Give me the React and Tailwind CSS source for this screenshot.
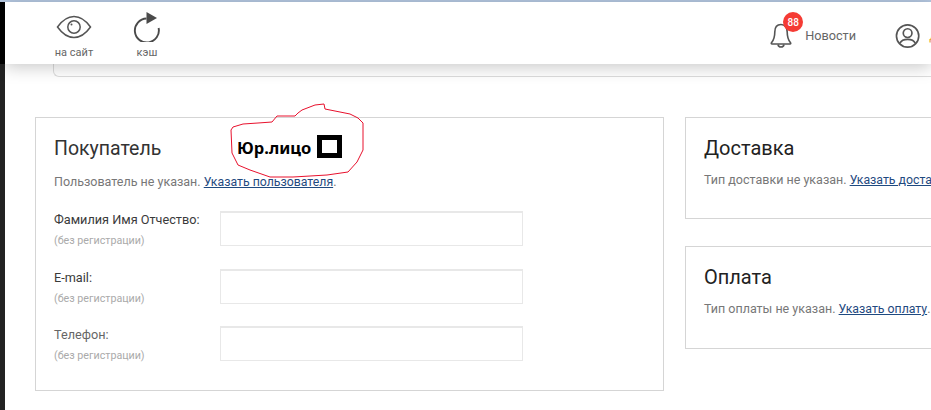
const font = { fontFamily: 'Roboto, sans-serif' };

const EyeIcon = () => (
  <svg width="36" height="24" viewBox="0 0 36 24" fill="none" stroke="#555" strokeWidth="1.5">
    <path d="M1.5 12C6.5 5 11.5 1.5 18 1.5S29.500 5 34.500 12C29.500 19 24.500 22.500 18 22.500S6.500 19 1.500 12Z" />
    <circle cx="18" cy="12" r="6.200" />
    <circle cx="15.500" cy="9.500" r="1" fill="#555" stroke="none" />
  </svg>
);

const RefreshIcon = () => (
  <svg width="28" height="31" viewBox="0 0 28 31" fill="none">
    <path d="M13.500 7.500A12 12 0 1 0 25.600 17" stroke="#4a4a4a" strokeWidth="1.900" />
    <path d="M13.500 1L24 7L13.500 13Z" fill="#4a4a4a" />
  </svg>
);

const BellIcon = () => (
  <svg width="22" height="25" viewBox="0 0 22 25" fill="none" stroke="#555" strokeWidth="1.600" strokeLinejoin="round">
    <path d="M11 1.500C6.500 1.500 4.800 5 4.800 9C4.800 14 3.800 17 1.500 19.800C1 20.500 1.300 21 2 21H20C20.700 21 21 20.500 20.500 19.800C18.200 17 17.200 14 17.200 9C17.200 5 15.500 1.500 11 1.500Z" />
    <path d="M8 21.500C8.300 23.200 9.500 24 11 24S13.700 23.200 14 21.500" />
  </svg>
);

const UserIcon = () => (
  <svg width="26" height="26" viewBox="0 0 26 26" fill="none" stroke="#555" strokeWidth="1.700">
    <circle cx="13" cy="13" r="11.500" />
    <circle cx="13" cy="10" r="4.500" />
    <path d="M5 20.500C6.500 17.500 9.500 16.500 13 16.500S19.500 17.500 21 20.500" />
  </svg>
);

const Scribble = () => (
  <svg className="absolute left-0 top-0 pointer-events-none" width="931" height="410" fill="none" stroke="#e8112d" strokeWidth="1">
    <path d="M231 130L233 127L243 124L258 123L272 122L277 116L295 116L298 113L302 110L315 105L324 104L325 109L350 114L358 118L363 123L363 150L357 162L348 172L327 175L293 177L270 177L250 170L238 165L232 153L231 130Z" />
  </svg>
);

const Field = ({ label, dark, mb }) => (
  <div className={`flex h-[35px] ${mb}`}>
    <div className="w-[166px] shrink-0">
      <div className={`text-[12.700px] leading-[18px] ${dark ? 'text-[#3a3a3a]' : 'text-[#666]'}`}>{label}</div>
      <div className="text-[10.700px] leading-[14px] mt-[5px] text-[#aaa]">(без регистрации)</div>
    </div>
    <div className="w-[303px] h-[35px] border border-[#e8e8e8] border-t-2 bg-white"></div>
  </div>
);

const SideCard = ({ title, text, link, tail, height }) => (
  <div className={`w-[300px] border border-r-0 border-[#d5d5d5] pl-[18px] pt-[17px] whitespace-nowrap ${height}`}>
    <h3 className="text-[20px] leading-[26px] text-[#222]">{title}</h3>
    <p className="text-[12.500px] leading-[18px] mt-[10px] text-[#777]">
      {text} <a href="#" className="text-[12.300px] text-[#1f4a80] underline">{link}</a>{tail}
    </p>
  </div>
);

export default function App() {
  return (
    <div style={font} className="relative w-[931px] h-[410px] overflow-hidden bg-white">
      <div className="h-[2px] bg-[#b4c7e0]"></div>
      <div className="flex">
        {/* Left strip */}
        <div className="w-[5px] shrink-0">
          <div className="h-[62px] bg-black"></div>
          <div className="h-[346px] bg-[#222]"></div>
        </div>

        <div className="flex-1 min-w-0">
          {/* Header */}
          <header className="relative z-10 h-[62px] bg-white shadow-[0_3px_16px_rgba(0,0,0,0.22)] flex items-start overflow-hidden">
            <div className="w-[50px] shrink-0"></div>
            <a href="#" className="w-[38px] mt-[13px] flex flex-col items-center">
              <EyeIcon />
              <span className="text-[11px] leading-[14px] mt-[7px] text-[#666] whitespace-nowrap">на сайт</span>
            </a>
            <a href="#" className="w-[38px] ml-[35px] mt-[9px] flex flex-col items-center">
              <RefreshIcon />
              <span className="text-[11px] leading-[14px] mt-[4px] text-[#666]">кэш</span>
            </a>
            <div className="flex-1"></div>
            <a href="#" className="relative flex items-center mt-[21px] mr-[39px]">
              <BellIcon />
              <span className="absolute -top-[11px] left-[13px] w-[20px] h-[20px] rounded-full bg-[#f53b34] text-white text-[10px] font-medium flex items-center justify-center">88</span>
              <span className="ml-[13px] text-[12.700px] text-[#666]">Новости</span>
            </a>
            <a href="#" className="flex items-center mt-[21px] mr-[-8px] w-[44px] shrink-0">
              <UserIcon />
              <span className="ml-[9px] text-[13px] text-[#e8a33d]">Д</span>
            </a>
          </header>

          {/* Panel under header */}
          <div className="ml-[48px] h-[13px] border border-t-0 border-r-0 border-[#ddd] rounded-bl-[6px]"></div>

          <div className="flex gap-[21px] items-start ml-[30px] mt-[40px]">
            {/* Buyer */}
            <div className="relative w-[629px] h-[274px] shrink-0 border border-[#d5d5d5] pl-[18px] pt-[19px]">
              <div className="flex items-start">
                <h3 className="w-[183px] text-[19.500px] leading-[24px] text-[#333]">Покупатель</h3>
                <span style={{ fontFamily: '"Noto Sans", sans-serif' }} className="text-[16.500px] leading-[20px] font-bold text-black mt-[1px]">Юр.лицо</span>
                <span className="w-[25px] h-[23px] ml-[6px] -mt-[2px] border-[5px] border-black bg-white"></span>
              </div>
              <p className="text-[12.500px] leading-[18px] mt-[12px] text-[#777]">
                Пользователь не указан. <a href="#" className="text-[12.300px] text-[#1f4a80] underline">Указать пользователя</a>.
              </p>
              <div className="mt-[20px]">
                <Field label="Фамилия Имя Отчество:" dark mb="mb-[23px]" />
                <Field label="E-mail:" dark mb="mb-[22px]" />
                <Field label="Телефон:" />
              </div>
            </div>

            {/* Delivery and payment */}
            <div className="flex flex-col gap-[27px] shrink-0">
              <SideCard title="Доставка" text="Тип доставки не указан." link="Указать доставку" tail="." height="h-[102px]" />
              <SideCard title="Оплата" text="Тип оплаты не указан." link="Указать оплату" tail="." height="h-[103px]" />
            </div>
          </div>
        </div>
      </div>
      <Scribble />
    </div>
  );
}
